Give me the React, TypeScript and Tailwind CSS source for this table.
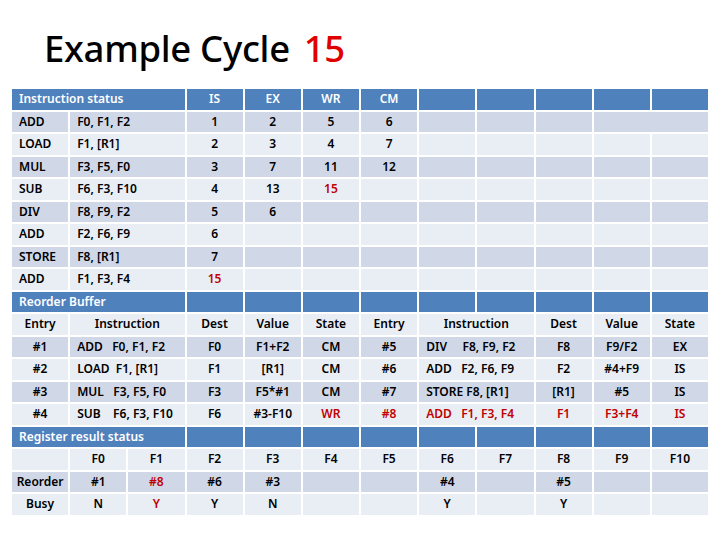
import type { ReactNode } from "react";

type Tone = "head" | "dark" | "light";

const toneClass: Record<Tone, string> = {
  head: "bg-[#4f81bd]",
  dark: "bg-[#d0d8e8]",
  light: "bg-[#e9edf4]",
};

function Cell({
  tone,
  span = 1,
  left = false,
  red = false,
  children,
}: {
  tone: Tone;
  span?: 1 | 2 | 3;
  left?: boolean;
  red?: boolean;
  children?: ReactNode;
}) {
  const spanClass = span === 3 ? "col-span-3" : span === 2 ? "col-span-2" : "";
  const color = red ? "text-[#c00000]" : tone === "head" ? "text-white" : "text-black";
  return (
    <div
      className={`${toneClass[tone]} ${spanClass} ${color} flex items-center whitespace-pre ${
        left ? "justify-start pl-[7px]" : "justify-center"
      }`}
    >
      {children}
    </div>
  );
}

const instructions = [
  ["ADD", "F0, F1, F2", "1", "2", "5", "6"],
  ["LOAD", "F1, [R1]", "2", "3", "4", "7"],
  ["MUL", "F3, F5, F0", "3", "7", "11", "12"],
  ["SUB", "F6, F3, F10", "4", "13", "15", ""],
  ["DIV", "F8, F9, F2", "5", "6", "", ""],
  ["ADD", "F2, F6, F9", "6", "", "", ""],
  ["STORE", "F8, [R1]", "7", "", "", ""],
  ["ADD", "F1, F3, F4", "15", "", "", ""],
];

const robLeft = [
  ["#1", "ADD   F0, F1, F2", "F0", "F1+F2", "CM"],
  ["#2", "LOAD  F1, [R1]", "F1", "[R1]", "CM"],
  ["#3", "MUL   F3, F5, F0", "F3", "F5*#1", "CM"],
  ["#4", "SUB    F6, F3, F10", "F6", "#3-F10", "WR"],
];

const robRight = [
  ["#5", "DIV     F8, F9, F2", "F8", "F9/F2", "EX"],
  ["#6", "ADD   F2, F6, F9", "F2", "#4+F9", "IS"],
  ["#7", "STORE F8, [R1]", "[R1]", "#5", "IS"],
  ["#8", "ADD   F1, F3, F4", "F1", "F3+F4", "IS"],
];

const regs = ["F0", "F1", "F2", "F3", "F4", "F5", "F6", "F7", "F8", "F9", "F10"];
const reorder = ["#1", "#8", "#6", "#3", "", "", "#4", "", "#5", "", ""];
const busy = ["N", "Y", "Y", "N", "", "", "Y", "", "Y", "", ""];

const blanks = (n: number, tone: Tone, key: string) =>
  Array.from({ length: n }, (_, i) => <Cell key={`${key}${i}`} tone={tone} />);

export default function App() {
  return (
    <div className="w-[720px] h-[540px] bg-white overflow-hidden font-['Noto_Sans',sans-serif]">
      <h1 className="pl-[44px] pt-[24px] h-[89px] text-[36.5px] leading-[48px] font-medium text-black tracking-[-0.3px]">
        Example Cycle<span className="ml-[14px] text-[#e00000]">15</span>
      </h1>

      <div className="ml-[12px] w-[696px] grid grid-cols-12 gap-x-[2px] gap-y-[2px] auto-rows-[20.5px] text-[12px] font-semibold">
        {/* Instruction status */}
        <Cell tone="head" span={3} left>Instruction status</Cell>
        <Cell tone="head">IS</Cell>
        <Cell tone="head">EX</Cell>
        <Cell tone="head">WR</Cell>
        <Cell tone="head">CM</Cell>
        {blanks(5, "head", "h1-")}

        {instructions.map((row, r) => {
          const tone: Tone = r % 2 === 0 ? "dark" : "light";
          return [
            <Cell key={`op${r}`} tone={tone} left>{row[0]}</Cell>,
            <Cell key={`args${r}`} tone={tone} span={2} left>{row[1]}</Cell>,
            <Cell key={`is${r}`} tone={tone} red={r === 7}>{row[2]}</Cell>,
            <Cell key={`ex${r}`} tone={tone}>{row[3]}</Cell>,
            <Cell key={`wr${r}`} tone={tone} red={r === 3}>{row[4]}</Cell>,
            <Cell key={`cm${r}`} tone={tone}>{row[5]}</Cell>,
            ...(r === 0
              ? [...blanks(3, tone, `e${r}-`), <Cell key={`m${r}`} tone={tone} span={2} />]
              : blanks(5, tone, `e${r}-`)),
          ];
        })}

        {/* Reorder buffer */}
        <Cell tone="head" span={3} left>Reorder Buffer</Cell>
        {blanks(9, "head", "h2-")}

        {[0, 1].map((side) => [
          <Cell key={`en${side}`} tone="light">Entry</Cell>,
          <Cell key={`in${side}`} tone="light" span={2}>Instruction</Cell>,
          <Cell key={`de${side}`} tone="light">Dest</Cell>,
          <Cell key={`va${side}`} tone="light">Value</Cell>,
          <Cell key={`st${side}`} tone="light">State</Cell>,
        ])}

        {robLeft.map((row, r) => {
          const tone: Tone = r % 2 === 0 ? "dark" : "light";
          const right = robRight[r];
          const redRow = r === 3;
          return [
            <Cell key={`le${r}`} tone={tone}>{row[0]}</Cell>,
            <Cell key={`li${r}`} tone={tone} span={2} left>{row[1]}</Cell>,
            <Cell key={`ld${r}`} tone={tone}>{row[2]}</Cell>,
            <Cell key={`lv${r}`} tone={tone}>{row[3]}</Cell>,
            <Cell key={`ls${r}`} tone={tone} red={redRow}>{row[4]}</Cell>,
            <Cell key={`re${r}`} tone={tone} red={redRow}>{right[0]}</Cell>,
            <Cell key={`ri${r}`} tone={tone} span={2} left red={redRow}>{right[1]}</Cell>,
            <Cell key={`rd${r}`} tone={tone} red={redRow}>{right[2]}</Cell>,
            <Cell key={`rv${r}`} tone={tone} red={redRow}>{right[3]}</Cell>,
            <Cell key={`rs${r}`} tone={tone} red={redRow}>{right[4]}</Cell>,
          ];
        })}

        {/* Register result status */}
        <Cell tone="head" span={3} left>Register result status</Cell>
        {blanks(9, "head", "h3-")}

        <Cell tone="light" />
        {regs.map((f) => (
          <Cell key={f} tone="light">{f}</Cell>
        ))}

        <Cell tone="dark">Reorder</Cell>
        {reorder.map((v, i) => (
          <Cell key={`ro${i}`} tone="dark" red={i === 1}>{v}</Cell>
        ))}

        <Cell tone="light">Busy</Cell>
        {busy.map((v, i) => (
          <Cell key={`b${i}`} tone="light" red={i === 1}>{v}</Cell>
        ))}
      </div>
    </div>
  );
}
